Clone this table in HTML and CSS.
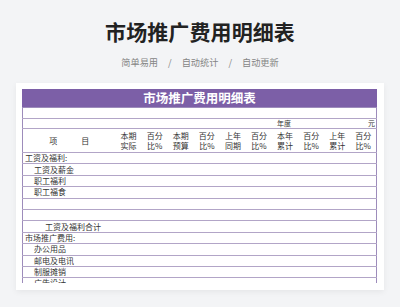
FILE: index.html
```html
<!DOCTYPE html>
<html lang="zh">
<head>
<meta charset="utf-8">
<link rel="stylesheet" href="styles.css">
</head>
<body>
<header class="hero">
  <h1 class="title">市场推广费用明细表</h1>
  <p class="tags"><span>简单易用</span><span class="sep">/</span><span>自动统计</span><span class="sep">/</span><span>自动更新</span></p>
</header>
<main class="card">
  <div class="sheet">
    <table class="grid">
      <colgroup><col class="c-item"><col span="10"></colgroup>
      <tr class="r-title"><td colspan="11">市场推广费用明细表</td></tr>
      <tr class="r-blank"><td colspan="11"></td></tr>
      <tr class="r-year"><td colspan="11"><span class="year">年度</span><span class="unit">元</span></td></tr>
      <tr class="r-head">
        <td class="item-h">项　　　目</td>
        <td><span class="ln">本期</span><span class="ln">实际</span></td><td><span class="ln">百分</span><span class="ln">比%</span></td>
        <td><span class="ln">本期</span><span class="ln">预算</span></td><td><span class="ln">百分</span><span class="ln">比%</span></td>
        <td><span class="ln">上年</span><span class="ln">同期</span></td><td><span class="ln">百分</span><span class="ln">比%</span></td>
        <td><span class="ln">本年</span><span class="ln">累计</span></td><td><span class="ln">百分</span><span class="ln">比%</span></td>
        <td><span class="ln">上年</span><span class="ln">累计</span></td><td><span class="ln">百分</span><span class="ln">比%</span></td>
      </tr>
      <tr class="r-data"><td class="l0">工资及福利:</td><td colspan="10"></td></tr>
      <tr class="r-data"><td class="l1">工资及薪金</td><td colspan="10"></td></tr>
      <tr class="r-data"><td class="l1">职工福利</td><td colspan="10"></td></tr>
      <tr class="r-data"><td class="l1">职工福食</td><td colspan="10"></td></tr>
      <tr class="r-data"><td class="l1"></td><td colspan="10"></td></tr>
      <tr class="r-data"><td class="l1"></td><td colspan="10"></td></tr>
      <tr class="r-data"><td class="l2">工资及福利合计</td><td colspan="10"></td></tr>
      <tr class="r-data"><td class="l0">市场推广费用:</td><td colspan="10"></td></tr>
      <tr class="r-data"><td class="l1">办公用品</td><td colspan="10"></td></tr>
      <tr class="r-data"><td class="l1">邮电及电讯</td><td colspan="10"></td></tr>
      <tr class="r-data"><td class="l1">制服摊销</td><td colspan="10"></td></tr>
      <tr class="r-data"><td class="l1">广告设计</td><td colspan="10"></td></tr>
    </table>
  </div>
</main>
</body>
</html>
```

FILE: styles.css
```css
html, body {
  margin: 0;
  padding: 0;
}
body {
  width: 400px;
  height: 307px;
  overflow: hidden;
  background: #f3f4f6;
  font-family: "Noto Sans CJK SC", "Noto Sans", sans-serif;
  color: #222;
}
.hero {
  padding-top: 17px;
  text-align: center;
}
.title {
  margin: 0;
  font-size: 21px;
  line-height: 28px;
  font-weight: 700;
  color: #222;
  letter-spacing: 0.1px;
}
.tags {
  margin: 10px 0 0;
  font-size: 9.2px;
  line-height: 14px;
  color: #858585;
  display: flex;
  justify-content: center;
}
.tags .sep {
  margin: 0 10px;
}
.card {
  display: block;
  margin: 14px 16px 0;
  background: #fff;
  padding: 6px 7px 7px 6px;
  box-shadow: 0 2px 6px rgba(0, 0, 0, 0.06);
}
.sheet {
  height: 194px;
  overflow: hidden;
}
.grid {
  width: 355px;
  table-layout: fixed;
  border-collapse: collapse;
  font-size: 8px;
  color: #333;
}
.c-item {
  width: 93px;
}
.grid td {
  padding: 0;
  border-left: 1px solid #9d8cbb;
  border-right: 1px solid #9d8cbb;
  border-bottom: 1px solid #b2a5c7;
  white-space: nowrap;
}
.grid td + td {
  border-left: none;
}
.grid td:not(:last-child) {
  border-right: none;
}
.r-title td {
  height: 18px;
  background: #7c5fa7;
  color: #fff;
  text-align: center;
  font-size: 12.5px;
  font-weight: 700;
  line-height: 18px;
  border-bottom: 1px solid #9d8cbb;
  border-left-color: #7c5fa7;
  border-right-color: #7c5fa7;
}
.r-blank td {
  height: 10px;
}
.r-year td {
  height: 9px;
  font-size: 7px;
  line-height: 9px;
}
.year {
  margin-left: 254px;
}
.unit {
  float: right;
  margin-right: 1px;
}
.r-head td {
  height: 23px;
  text-align: center;
  font-size: 8px;
  color: #333;
}
.ln {
  display: block;
  line-height: 10px;
  height: 10px;
  overflow: visible;
}
.r-data td {
  height: 10.4px;
  line-height: 10px;
}
.l0 { padding-left: 2px !important; }
.l1 { padding-left: 11px !important; }
.l2 { padding-left: 22px !important; }
```
